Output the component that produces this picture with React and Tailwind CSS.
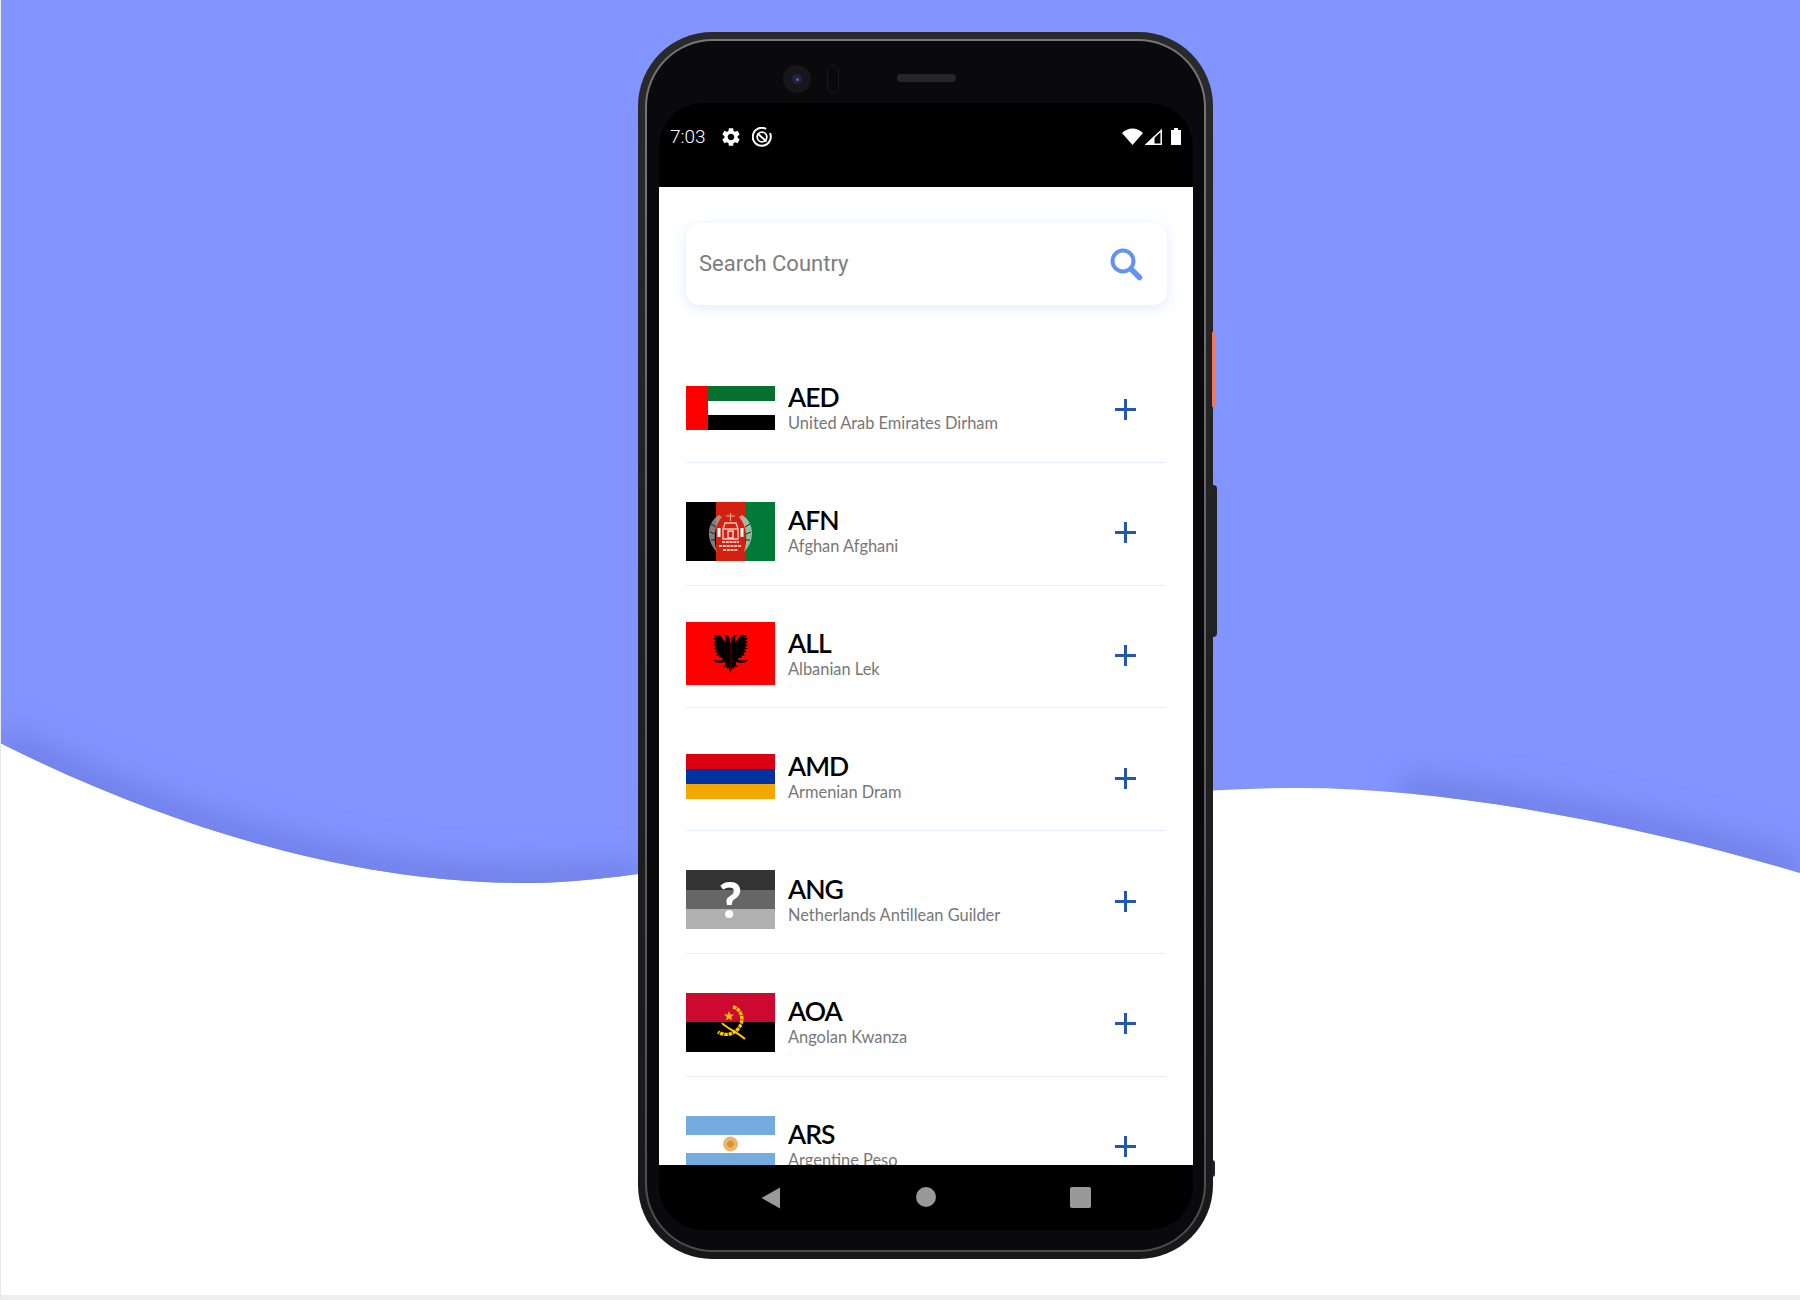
import React from "react";
import { MdSettings } from "react-icons/md";

const currencies = [
  { code: "AED", name: "United Arab Emirates Dirham", flag: FlagAED },
  { code: "AFN", name: "Afghan Afghani", flag: FlagAFN },
  { code: "ALL", name: "Albanian Lek", flag: FlagALL },
  { code: "AMD", name: "Armenian Dram", flag: FlagAMD },
  { code: "ANG", name: "Netherlands Antillean Guilder", flag: FlagANG },
  { code: "AOA", name: "Angolan Kwanza", flag: FlagAOA },
  { code: "ARS", name: "Argentine Peso", flag: FlagARS },
];

export default function App() {
  return (
    <div className="relative h-[1300px] w-full overflow-hidden bg-white">
      <Background />
      <div className="relative flex justify-center pt-[32px] pl-[51px]">
        <Phone />
      </div>
    </div>
  );
}

function Background() {
  const wave =
    "M0 743 C190 838 370 883 526 883 C700 883 1000 788 1300 788 C1450 788 1640 825 1800 873 L1800 0 L0 0 Z";
  return (
    <svg className="absolute inset-0" width="1800" height="1300" viewBox="0 0 1800 1300">
      <defs>
        <clipPath id="waveClip">
          <path d="M0 743 C190 838 370 883 526 883 C700 883 1000 788 1300 788 C1450 788 1640 825 1800 873 L1800 0 L0 0 Z" />
        </clipPath>
        <filter id="waveBlur" x="-20%" y="-50%" width="140%" height="200%">
          <feGaussianBlur stdDeviation="14" />
        </filter>
      </defs>
      <path d={wave} fill="#8294ff" />
      {/* darker band along the curve, left and right of the phone */}
      <g clipPath="url(#waveClip)">
        <path
          d="M0 743 C190 838 370 883 526 883 C580 883 610 881 640 878"
          fill="none"
          stroke="#7282ea"
          strokeWidth="40"
          filter="url(#waveBlur)"
        />
        <path
          d="M1400 793 C1520 804 1660 831 1800 873"
          fill="none"
          stroke="#7282ea"
          strokeWidth="40"
          filter="url(#waveBlur)"
        />
      </g>
      <rect x="0" y="1295" width="1800" height="5" fill="#eeeeee" />
      <rect x="0" y="0" width="1" height="1300" fill="#e8e8ee" />
    </svg>
  );
}

function Phone() {
  return (
    <div className="relative h-[1227px] w-[575px] rounded-[74px] bg-linear-to-b from-[#2a2a2a] to-[#181818] p-[7px]">
      {/* side buttons */}
      <div className="absolute right-[-3px] top-[300px] h-[75px] w-[4px] rounded-r-sm bg-[#ef7b5c]" />
      <div className="absolute right-[-4px] top-[453px] h-[152px] w-[5px] rounded-r-sm bg-[#222222]" />
      <div className="absolute right-[-2px] top-[1128px] h-[17px] w-[3px] rounded-r-sm bg-[#222222]" />
      <div className="h-full w-full rounded-[68px] bg-linear-to-b from-[#77777a] to-[#4c4c4e] p-[2px]">
        <div className="flex h-full w-full flex-col rounded-[66px] bg-[#0a0a0c] pb-[20px] pl-[12px] pr-[11px]">
          <div className="relative h-[62px] shrink-0">
            <Earpiece />
          </div>
          <div className="flex flex-1 flex-col overflow-hidden rounded-[44px] bg-black">
            <StatusBar />
            <div className="h-[978px] shrink-0 overflow-hidden bg-white px-[27px] pt-[36px]">
              <SearchBox />
              <div className="mt-[35px]">
                {currencies.map((c) => (
                  <CurrencyRow key={c.code} {...c} />
                ))}
              </div>
            </div>
            <NavBar />
          </div>
        </div>
      </div>
    </div>
  );
}

function Earpiece() {
  return (
    <>
      <div className="absolute left-[124px] top-[24px] flex h-[28px] w-[28px] items-center justify-center rounded-full bg-[#17171a]">
        <div className="flex h-[10px] w-[10px] items-center justify-center rounded-full bg-[#1d2440]">
          <div className="h-[3px] w-[3px] rounded-full bg-[#5a6aa0]" />
        </div>
      </div>
      <div className="absolute left-[168px] top-[24px] h-[28px] w-[12px] rounded-full border border-[#1a1a1d]" />
      <div className="absolute left-[238px] top-[33px] h-[8px] w-[59px] rounded-full bg-[#26262a]" />
    </>
  );
}

function StatusBar() {
  return (
    <div className="flex h-[84px] shrink-0 items-start pl-[11px] pr-[12px] pt-[22px] text-white">
      <span className="font-['Roboto',sans-serif] text-[19px] font-light leading-[24px]">7:03</span>
      <MdSettings className="ml-[14px] mt-[1px] h-[22px] w-[22px]" />
      <DataSaverIcon />
      <div className="ml-auto mt-[3px] flex items-end">
        <svg width="21" height="17" viewBox="0 0 21 17" fill="white">
          <path d="M0 5 C6 -1 15 -1 21 5 L10.5 17 Z" />
        </svg>
        <svg className="ml-[2px]" width="17" height="16" viewBox="0 0 17 16">
          <path d="M1.5 15.2 L16.2 1.5 L16.2 15.2 Z" fill="none" stroke="white" strokeWidth="1.5" />
          <path d="M0 16 L9.5 7 L9.5 16 Z" fill="white" />
        </svg>
        <svg className="ml-[9px]" width="10" height="17" viewBox="0 0 10 17" fill="white">
          <path d="M3 0 H7 V2 H10 V17 H0 V2 H3 Z" />
        </svg>
      </div>
    </div>
  );
}

function DataSaverIcon() {
  return (
    <svg className="ml-[10px] mt-[2px]" width="20" height="20" viewBox="0 0 20 20" fill="none" stroke="white">
      <path d="M14.2 2 A9 9 0 1 0 18 6.2" strokeWidth="2" />
      <circle cx="10" cy="10" r="4.8" strokeWidth="1.8" />
      <line x1="5.5" y1="6.5" x2="14.5" y2="14.5" strokeWidth="2" />
    </svg>
  );
}

function SearchBox() {
  return (
    <div className="flex h-[82px] w-[481px] items-center rounded-[14px] bg-white pb-[2px] pl-[13px] pr-[24px] shadow-[0_3px_14px_rgba(120,160,240,0.22)]">
      <span className="font-['Roboto',sans-serif] text-[22px] text-[#7d7d7d]">Search Country</span>
      <svg className="ml-auto mt-[2px]" width="34" height="34" viewBox="0 0 34 34" fill="none" stroke="#6392f5">
        <circle cx="14" cy="14" r="10.5" strokeWidth="4" />
        <line x1="22" y1="22" x2="30.5" y2="30.5" strokeWidth="5.5" strokeLinecap="round" />
      </svg>
    </div>
  );
}

function CurrencyRow({ code, name, flag: Flag }) {
  return (
    <div className="flex h-[122.8px] w-[480px] items-center border-b border-[#e3f0fb] pt-[15px]">
      <div className="w-[89px] shrink-0">
        <Flag />
      </div>
      <div className="mb-[2px] ml-[13px] font-['Lato',sans-serif]">
        <div className="text-[26.5px] font-semibold leading-[32px] tracking-[-1px] text-black">{code}</div>
        <div className="text-[16.4px] leading-[20px] text-[#777777]">{name}</div>
      </div>
      <svg className="ml-auto mr-[30px] mt-[3px]" width="21" height="21" viewBox="0 0 21 21" fill="#2557ab">
        <rect x="9" y="0" width="3" height="21" />
        <rect x="0" y="9" width="21" height="3" />
      </svg>
    </div>
  );
}

function NavBar() {
  return (
    <div className="relative flex flex-1 items-start">
      <svg className="absolute left-[102px] top-[22px]" width="20" height="22" viewBox="0 0 20 22" fill="#999999">
        <path d="M19 0.5 L19 21.5 L0.5 11 Z" />
      </svg>
      <div className="absolute left-[257px] top-[22px] h-[20px] w-[20px] rounded-full bg-[#999999]" />
      <div className="absolute left-[411px] top-[22px] h-[21px] w-[21px] rounded-[2px] bg-[#999999]" />
    </div>
  );
}

function FlagAED() {
  return (
    <svg className="block" width="89" height="44" viewBox="0 0 89 44">
      <rect width="89" height="15" fill="#06702e" />
      <rect y="15" width="89" height="15" fill="#ffffff" />
      <rect y="29" width="89" height="15" fill="#000000" />
      <rect width="22" height="44" fill="#ff0000" />
    </svg>
  );
}

function FlagAFN() {
  return (
    <svg className="block" width="89" height="59" viewBox="0 0 89 59">
      <rect width="30" height="59" fill="#000000" />
      <rect x="30" width="30" height="59" fill="#d32011" />
      <rect x="59" width="30" height="59" fill="#007a36" />
      {/* wreath */}
      <path d="M33 13 C21 20 19 38 31 50 C27 38 28 24 36 15 Z" fill="#a8a8a8" fillOpacity="0.75" />
      <path d="M56 13 C68 20 70 38 58 50 C62 38 61 24 53 15 Z" fill="#c4d4ca" fillOpacity="0.75" />
      <path d="M25 22 l5 3 M24 30 l5 2 M25 38 l5 0 M64 22 l-5 3 M65 30 l-5 2 M64 38 l-5 0" stroke="#222222" strokeWidth="1" />
      {/* mosque */}
      <path d="M37 27 h15 v10 h-15 Z M39 21 h11 l2 6 h-15 Z" fill="none" stroke="#f5c9c2" strokeWidth="1.3" />
      <path d="M44.5 11 v8 M40 14 h9" stroke="#f0a89e" strokeWidth="1.2" />
      <path d="M36 40 h17 M33 44 h23 M37 48 h15" stroke="#f5c9c2" strokeWidth="2.2" strokeDasharray="3 0.8" />
      <path d="M33 26 v9 M56 26 v9" stroke="#ffffff" strokeWidth="3" />
      <rect x="42" y="29" width="5" height="7" fill="none" stroke="#ffffff" strokeWidth="1.2" />
    </svg>
  );
}

function FlagALL() {
  const half =
    "M44.5 22 L43.5 16 L41 13 L37.5 13.5 L40 15.5 L39.5 20 L37 17 L34 13 L27.5 13 L30 16 L27 16 L30 19 L27 19.5 L30 22 L27 23 L30.5 25 L27.5 26.5 L31 28 L28.5 30 L32 31 L30 33.5 L34 33.5 L33 36 L36 35.5 L37 38 L33 38.5 L27 38 L30 40.5 L35 41 L39 40 L39 43 L37 45 L40.5 44.5 L41 47 L43 46 L44.5 51 Z";
  return (
    <svg className="block" width="89" height="63" viewBox="0 0 89 63">
      <rect width="89" height="63" fill="#ff0000" />
      <path d={half} fill="#000000" />
      <path d={half} fill="#000000" transform="translate(89 0) scale(-1 1)" />
    </svg>
  );
}

function FlagAMD() {
  return (
    <svg className="block" width="89" height="45" viewBox="0 0 89 45">
      <rect width="89" height="15" fill="#d90012" />
      <rect y="15" width="89" height="15" fill="#0033a0" />
      <rect y="30" width="89" height="15" fill="#f2a800" />
    </svg>
  );
}

function FlagANG() {
  return (
    <div className="relative flex h-[59px] w-[89px] flex-col overflow-hidden">
      <div className="h-[20px] bg-[#333333]" />
      <div className="h-[19px] bg-[#666666]" />
      <div className="h-[20px] bg-[#b0b0b0]" />
      <span className="absolute inset-x-0 top-[-2px] text-center font-['Lato',sans-serif] text-[50px] font-black leading-[62px] text-white">
        ?
      </span>
    </div>
  );
}

function FlagAOA() {
  return (
    <svg className="block" width="89" height="59" viewBox="0 0 89 59">
      <rect width="89" height="30" fill="#cc092f" />
      <rect y="29" width="89" height="30" fill="#000000" />
      <path d="M47 14 C56 16 59 28 52 36 C47 42 38 43 32 39" fill="none" stroke="#ffcb00" strokeWidth="3.4" strokeDasharray="3.5 0.8" />
      <path d="M36 30 C40 35 50 38 59 46" fill="none" stroke="#ffcb00" strokeWidth="2" />
      <path d="M43 18 L44.3 21.6 L48 21.6 L45 23.9 L46.1 27.5 L43 25.3 L39.9 27.5 L41 23.9 L38 21.6 L41.7 21.6 Z" fill="#ffcb00" />
    </svg>
  );
}

function FlagARS() {
  return (
    <svg className="block" width="89" height="59" viewBox="0 0 89 59">
      <rect width="89" height="19" fill="#74acdf" />
      <rect y="19" width="89" height="18" fill="#ffffff" />
      <rect y="37" width="89" height="22" fill="#74acdf" />
      <circle cx="44.5" cy="28" r="7.5" fill="#e9b86a" />
      <circle cx="44.5" cy="28" r="3.5" fill="#d9952b" />
    </svg>
  );
}
